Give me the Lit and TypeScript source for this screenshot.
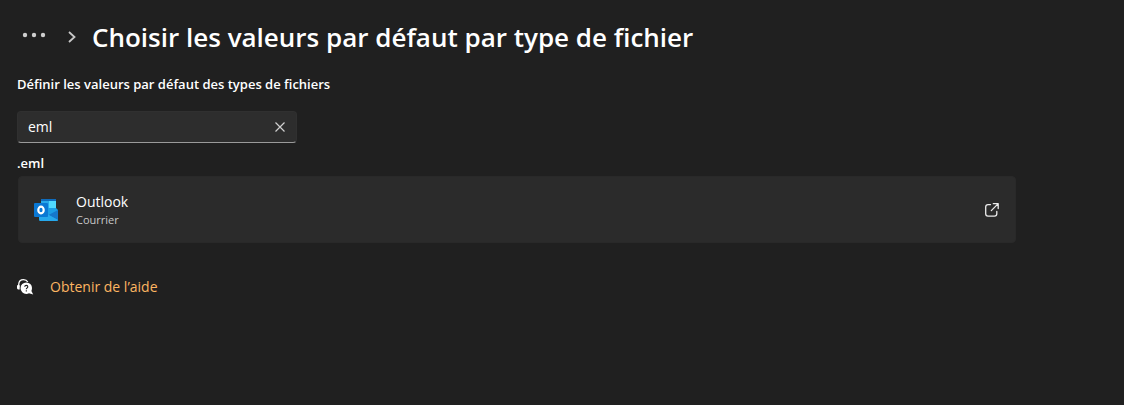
import { LitElement, html, css, svg } from "lit";
import { customElement, property, state } from "lit/decorators.js";

const outlookIcon = svg`
  <svg class="app-icon" viewBox="0 0 24 24" width="24" height="24" aria-hidden="true">
    <rect x="7" y="1" width="15" height="15" fill="#1490df"></rect>
    <rect x="7" y="1" width="15" height="2" fill="#0f6cbd"></rect>
    <rect x="7" y="3" width="8" height="7" fill="#28a8ea"></rect>
    <rect x="15" y="3" width="7" height="7" fill="#50d9ff"></rect>
    <path d="M5 18L14 10H22L24 12V21.500Q24 23 22.500 23H6.500Q5 23 5 21.500Z" fill="#1b9de6"></path>
    <path d="M24 12V22L14.500 17Z" fill="#1577cc"></path>
    <path d="M14 16.500L24 22Q23.500 23 22.500 23H6L5 21V19H14Z" fill="#26a8ec"></path>
    <rect x="0" y="5" width="14" height="14" rx="1" fill="#0a78d4"></rect>
    <ellipse cx="7" cy="12" rx="2.700" ry="3.300" fill="none" stroke="#fff" stroke-width="2.200"></ellipse>
  </svg>`;

const openIcon = svg`
  <svg viewBox="0 0 16 16" width="16" height="16" fill="none" stroke="#ececec" stroke-width="1.300"
    stroke-linecap="round" stroke-linejoin="round" aria-hidden="true">
    <path d="M6.500 2.600H4Q1.700 2.600 1.700 4.900V11.800Q1.700 14.100 4 14.100H10.500Q12.800 14.100 12.800 11.800V9.500"></path>
    <path d="M9.300 1.700H14.200V6.600M14 1.900L7.300 8.600"></path>
  </svg>`;

const helpIcon = svg`
  <svg viewBox="0 0 18 18" width="18" height="18" aria-hidden="true">
    <path d="M2.700 9V6.500Q3 1.700 7.500 1.700Q10.500 1.700 11.800 4" fill="none" stroke="#fff" stroke-width="1.300"></path>
    <path d="M1 7.300H3.700V11.500H2.200Q1 11.300 1 10Z" fill="#fff"></path>
    <path d="M10.300 4.400A5.700 5.700 0 0 1 16 10.100Q16 11.800 15.400 13L17.200 16.600L13 15.200Q11.700 15.900 10.300 15.900A5.750 5.750 0 0 1 10.300 4.400Z" fill="#fff"></path>
    <path d="M8.700 8.700Q8.800 7.400 10.300 7.400Q11.800 7.400 11.800 8.700Q11.800 9.500 11 10Q10.300 10.400 10.300 11.200M10.300 12.300V13.500" fill="none" stroke="#202020" stroke-width="1.100"></path>
  </svg>`;

@customElement("default-app-card")
export class DefaultAppCard extends LitElement {
  @property() name = "";
  @property() detail = "";

  static styles = css`
    :host { display: block; }
    .card {
      box-sizing: border-box;
      width: 100%;
      display: flex;
      align-items: center;
      gap: 18px;
      padding: 15px;
      border: 1px solid #292929;
      border-radius: 4px;
      background: #2b2b2b;
      color: #fff;
      font: inherit;
      text-align: left;
    }
    .card:hover { background: #303030; }
    .app-icon { flex: none; }
    .text { flex: 1; display: flex; flex-direction: column; }
    .name { font-size: 14px; line-height: 20px; }
    .detail { font-size: 11px; line-height: 15px; color: #c8c8c8; }
    .open { display: flex; }
  `;

  render() {
    return html`
      <button class="card" type="button">
        ${outlookIcon}
        <span class="text">
          <span class="name">${this.name}</span>
          <span class="detail">${this.detail}</span>
        </span>
        <span class="open">${openIcon}</span>
      </button>`;
  }
}

@customElement("app-root")
export class AppRoot extends LitElement {
  @state() private query = "eml";

  static styles = css`
    :host {
      display: block;
      box-sizing: border-box;
      min-height: 100vh;
      padding: 16px;
      background: #202020;
      color: #fff;
      font-family: "Segoe UI", "Open Sans", "Noto Sans", sans-serif;
      font-size: 14px;
      line-height: 20px;
    }
    .page { max-width: 1000px; }
    .crumbs { display: flex; align-items: center; height: 42px; }
    .more {
      display: flex;
      padding: 4px;
      border: 0;
      background: none;
      margin: 0 17px 4px 2px;
    }
    .title { margin: 0 0 0 15px; font-size: 26px; line-height: 36px; font-weight: 600; white-space: nowrap; }
    .label { display: block; margin: 16px 0 0 1px; font-size: 13px; font-weight: 600; }
    .search {
      box-sizing: border-box;
      display: flex;
      align-items: center;
      width: 280px;
      height: 32px;
      margin: 17px 0 0 1px;
      border: 1px solid #303030;
      border-bottom-color: #9a9a9a;
      border-radius: 4px;
      background: #2d2d2d;
    }
    .search:focus-within { border-bottom-color: #ffb464; }
    .field {
      flex: 1;
      min-width: 0;
      padding: 0 10px;
      border: 0;
      outline: 0;
      background: none;
      color: #fff;
      font: inherit;
    }
    .clear { display: flex; padding: 6px 10px; border: 0; background: none; }
    .type { margin: 10px 0 0 1px; font-size: 13px; line-height: 20px; font-weight: 600; }
    .card { margin: 3px 0 0 2px; }
    .help { display: flex; align-items: center; gap: 16px; margin: 34px 0 0; }
    .link { color: #fdb562; text-decoration: none; }
    .link:hover { text-decoration: underline; }
  `;

  private onInput(event: Event) {
    this.query = (event.target as HTMLInputElement).value;
  }

  render() {
    return html`
      <main class="page">
        <header class="crumbs">
          <button class="more" type="button" aria-label="Plus">
            <svg viewBox="0 0 24 6" width="24" height="6" fill="#cfcfcf">
              <circle cx="3" cy="3" r="2.200"></circle>
              <circle cx="12" cy="3" r="2.200"></circle>
              <circle cx="21" cy="3" r="2.200"></circle>
            </svg>
          </button>
          <svg viewBox="0 0 10 14" width="10" height="14" fill="none" stroke="#c8c8c8" stroke-width="1.800" aria-hidden="true">
            <path d="M2 2L7.500 7L2 12"></path>
          </svg>
          <h1 class="title">Choisir les valeurs par défaut par type de fichier</h1>
        </header>
        <label class="label" for="filetype">Définir les valeurs par défaut des types de fichiers</label>
        <div class="search">
          <input class="field" id="filetype" type="text" autocomplete="off" spellcheck="false"
            .value=${this.query} @input=${this.onInput} />
          <button class="clear" type="button" aria-label="Effacer" @click=${() => (this.query = "")}>
            <svg viewBox="0 0 12 12" width="12" height="12" stroke="#cfcfcf" stroke-width="1.200">
              <path d="M1.500 1.500L10.500 10.500M10.500 1.500L1.500 10.500"></path>
            </svg>
          </button>
        </div>
        <div class="type">.eml</div>
        <default-app-card class="card" name="Outlook" detail="Courrier"></default-app-card>
        <div class="help">
          ${helpIcon}
          <a class="link" href="#aide">Obtenir de l’aide</a>
        </div>
      </main>`;
  }
}
